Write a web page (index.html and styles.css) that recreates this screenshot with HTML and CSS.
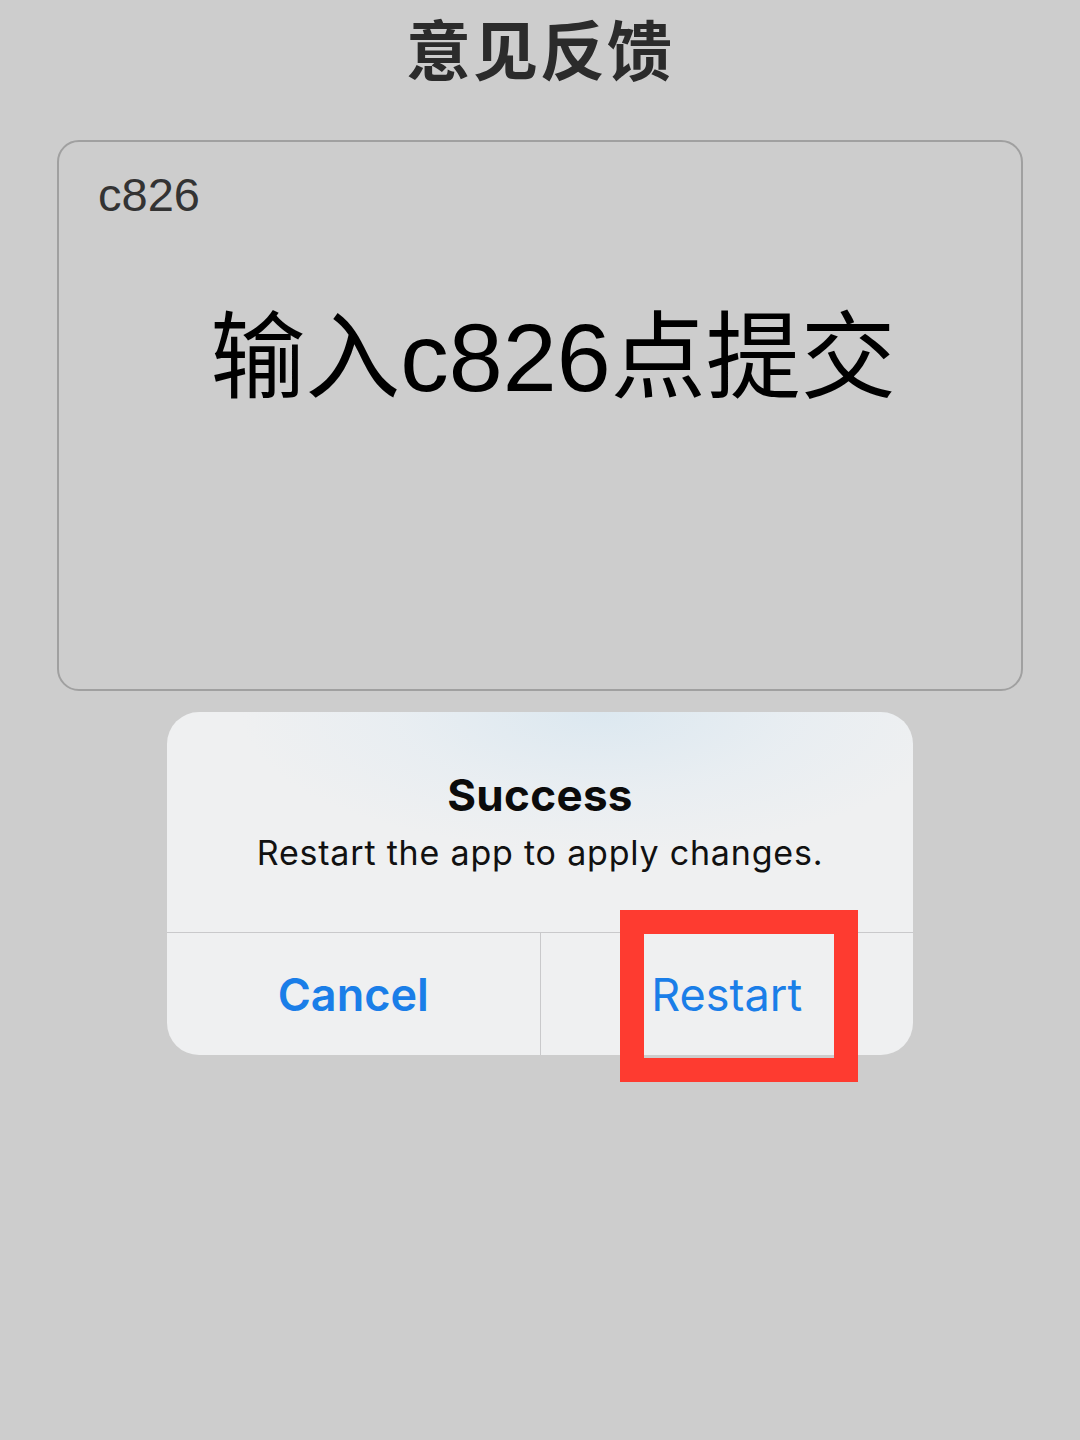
FILE: index.html
```html
<!DOCTYPE html>
<html lang="zh">
<head>
<meta charset="utf-8">
<link rel="stylesheet" href="styles.css">
</head>
<body>
<div class="page">
  <h1 class="title">意见反馈</h1>
  <div class="textbox">
    <div class="typed">c826</div>
    <div class="hint">输入<span class="latin">c826</span>点提交</div>
  </div>
  <div class="alert">
    <div class="alert-body">
      <div class="alert-title">Success</div>
      <div class="alert-msg">Restart the app to apply changes.</div>
    </div>
    <div class="alert-actions">
      <div class="btn btn-cancel">Cancel</div>
      <div class="btn btn-restart">Restart</div>
    </div>
    <div class="highlight"></div>
  </div>
</div>
</body>
</html>
```

FILE: styles.css
```css
html, body {
  margin: 0;
  padding: 0;
  background: #cdcdcd;
}
.page {
  width: 1080px;
  height: 1440px;
  display: flex;
  flex-direction: column;
  align-items: center;
  font-family: Inter, "Noto Sans", "Noto Sans CJK SC", sans-serif;
}
.title {
  margin: 0;
  height: 140px;
  box-sizing: border-box;
  font-family: "Noto Sans CJK SC", sans-serif;
  font-weight: 700;
  font-size: 65px;
  line-height: normal;
  color: #2b2b2b;
  letter-spacing: 2px;
}
.textbox {
  width: 966px;
  height: 551px;
  box-sizing: border-box;
  border: 2px solid #a0a0a0;
  border-radius: 22px;
  padding: 22px 39px 0;
  display: flex;
  flex-direction: column;
}
.typed {
  font-family: "Liberation Sans", Arial, sans-serif;
  font-size: 47px;
  line-height: 62px;
  color: #333;
}
.hint {
  margin-top: 64px;
  align-self: center;
  font-family: "Noto Sans CJK SC", sans-serif;
  font-size: 95px;
  line-height: 120px;
  color: #000;
  padding-left: 26px;
}
.hint .latin {
  font-family: "Liberation Sans", Arial, sans-serif;
  font-size: 97px;
}
.alert {
  position: relative;
  margin-top: 21px;
  width: 746px;
  height: 343px;
  border-radius: 32px;
  background:
    radial-gradient(ellipse 360px 140px at 58% 0%, #dce8f0 0%, rgba(228,236,242,0.6) 55%, rgba(239,240,241,0) 100%),
    #eff0f1;
  display: flex;
  flex-direction: column;
}
.alert-body {
  height: 221px;
  box-sizing: border-box;
  border-bottom: 1px solid #c9c9cb;
  display: flex;
  flex-direction: column;
  align-items: center;
  padding-top: 56px;
}
.alert-title {
  font-weight: 700;
  font-size: 44px;
  line-height: 54px;
  color: #0b0b0b;
  letter-spacing: 0.3px;
}
.alert-msg {
  margin-top: 10px;
  font-size: 34px;
  line-height: 42px;
  color: #111;
  letter-spacing: 0.8px;
}
.alert-actions {
  flex: 1;
  display: flex;
}
.btn {
  flex: 1;
  display: flex;
  align-items: center;
  justify-content: center;
  font-size: 45px;
  color: #1a7ee8;
  padding-top: 2px;
  padding-bottom: 2px;
}
.btn-cancel {
  font-weight: 600;
  border-right: 1px solid #c9c9cb;
}
.btn-restart {
  font-weight: 400;
}
.highlight {
  position: absolute;
  left: 453px;
  top: 198px;
  width: 238px;
  height: 172px;
  box-sizing: border-box;
  border: 24px solid #fe3b30;
}
```
